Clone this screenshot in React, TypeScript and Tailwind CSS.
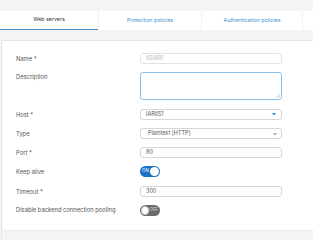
import { ChevronDown } from 'lucide-react';

const Label = ({ children }: { children: React.ReactNode }) => (
  <div className="w-[124px] shrink-0 text-[5.8px] leading-[8px] text-[#555]">{children}</div>
);

const Toggle = ({ on }: { on: boolean }) =>
  on ? (
    <div className="flex h-[11px] w-[20px] items-center justify-between rounded-full bg-[#1a73c4] pl-[2px] pr-[1px]">
      <span className="text-[4.5px] leading-none text-white">ON</span>
      <span className="h-[9px] w-[9px] rounded-full bg-white" />
    </div>
  ) : (
    <div className="flex h-[11px] w-[20px] items-center justify-between rounded-full bg-[#6b6b6b] pl-[1px] pr-[2px]">
      <span className="h-[9px] w-[9px] rounded-full border border-[#ccc] bg-white" />
      <span className="text-[4.5px] leading-none text-[#ddd]">OFF</span>
    </div>
  );

const App = () => {
  return (
    <div className="h-[240px] w-[313px] overflow-hidden bg-[#f4f4f4] pt-[11px] font-['Inter',sans-serif]">
      <div className="flex h-[19px] bg-white text-[5.3px]">
        <div className="flex w-[98px] items-center justify-center border-b-[1.5px] border-[#3f8fd2] text-[#333]">
          Web servers
        </div>
        <div className="flex w-[103px] items-center justify-center border-l border-[#f0f0f0] text-[#3f8fd2]">
          Protection policies
        </div>
        <div className="flex w-[102px] items-center justify-center border-x border-[#f0f0f0] text-[#3f8fd2]">
          Authentication policies
        </div>
      </div>

      <div className="ml-[1px] mt-[10px] flex h-[210px] flex-col border-l border-t border-[#e6e6e6] bg-white">
        <div className="flex flex-col pl-[14px] pt-[12px]">
          <div className="flex h-[11px] items-center">
            <Label>Name *</Label>
            <div className="flex h-[11px] w-[142px] items-center rounded-[3px] border border-[#e2e2e2] bg-white px-[5px] text-[5.5px] text-[#b5b5b5]">
              IISIAR1
            </div>
          </div>

          <div className="mt-[8px] flex">
            <div className="pt-[1px]">
              <Label>Description</Label>
            </div>
            <div className="relative h-[28px] w-[142px] rounded-[3px] border border-[#8cc0ea]">
              <svg className="absolute bottom-[1px] right-[1px]" width="4" height="4" viewBox="0 0 4 4">
                <path d="M4 0 L0 4 M4 2 L2 4" stroke="#aaa" strokeWidth="0.6" />
              </svg>
            </div>
          </div>

          <div className="mt-[9px] flex h-[11px] items-center">
            <Label>Host *</Label>
            <div className="flex h-[11px] w-[142px] items-center justify-between rounded-[3px] border border-[#d6d6d6] px-[5px] text-[5.5px] text-[#555]">
              <span>IARIIS1</span>
              <svg width="4" height="3" viewBox="0 0 4 3">
                <path d="M0 0 H4 L2 2.5 Z" fill="#2d86d4" />
              </svg>
            </div>
          </div>

          <div className="mt-[8px] flex h-[11px] items-center">
            <Label>Type</Label>
            <div className="flex h-[11px] w-[142px] items-center justify-between rounded-[3px] border border-[#d6d6d6] pl-[7px] pr-[3px] text-[5.5px] text-[#555]">
              <span>Plaintext [HTTP]</span>
              <ChevronDown size={6} strokeWidth={3} className="text-[#444]" />
            </div>
          </div>

          <div className="mt-[8px] flex h-[11px] items-center">
            <Label>Port *</Label>
            <div className="flex h-[11px] w-[142px] items-center rounded-[3px] border border-[#d6d6d6] px-[5px] text-[5.5px] text-[#555]">
              80
            </div>
          </div>

          <div className="mt-[8px] flex h-[11px] items-center">
            <Label>Keep alive</Label>
            <Toggle on />
          </div>

          <div className="mt-[9px] flex h-[11px] items-center">
            <Label>Timeout *</Label>
            <div className="flex h-[11px] w-[142px] items-center rounded-[3px] border border-[#d6d6d6] px-[5px] text-[5.5px] text-[#555]">
              300
            </div>
          </div>

          <div className="mt-[8px] flex h-[11px] items-start">
            <div className="pt-[1px]">
              <Label>Disable backend connection pooling</Label>
            </div>
            <Toggle on={false} />
          </div>
        </div>
        <div className="mt-[14px] flex-1 border-t border-[#ececec] bg-[#f4f4f4]" />
      </div>
    </div>
  );
};

export default App;
